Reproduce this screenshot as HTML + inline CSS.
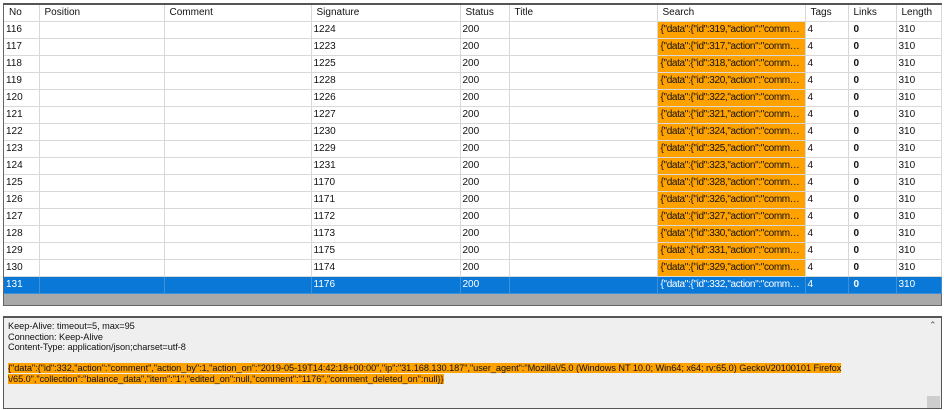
<!DOCTYPE html>
<html><head><style>
body{margin:0;width:944px;height:410px;background:#fff;position:relative;overflow:hidden;font-family:"Liberation Sans",sans-serif;font-size:10px;color:#111}
.grid{position:absolute;left:3px;top:3px;width:937px;height:300px;border:1px solid #666;border-top:2px solid #555;background:#a9a9a9}
table{border-collapse:collapse;table-layout:fixed;width:937px;background:#fff}
td,th{height:16px;padding:0 0 0 2px;border-right:1px solid #d8d8d8;border-bottom:1px solid #d8d8d8;white-space:nowrap;overflow:hidden;text-overflow:ellipsis;text-align:left;font-weight:normal;line-height:16px}
th{padding-left:5px;background:#fff}
td.s{background:#ffa200;padding-left:3px;padding-right:4px;letter-spacing:-0.35px}
td.b{font-weight:bold;padding-left:5px}
tr.sel td{background:#0a78d7;color:#fff;border-color:#3d8fd8}
.box{position:absolute;left:3px;top:316px;width:937px;height:90px;border:1px solid #555;border-top:2px solid #555;background:#efefef}
.txt{position:absolute;left:4px;top:3px;line-height:10.5px;font-size:9.2px;letter-spacing:-0.05px;color:#111}
.hl{background:#ffa200}
.sb{position:absolute;right:0;top:0;width:15px;height:90px;background:#efefef}
</style></head><body>
<div class="grid"><table>
<colgroup><col style="width:35px"><col style="width:125px"><col style="width:147px"><col style="width:149px"><col style="width:49px"><col style="width:148px"><col style="width:148px"><col style="width:43px"><col style="width:48px"><col style="width:45px"></colgroup>
<tr><th>No</th><th>Position</th><th>Comment</th><th>Signature</th><th>Status</th><th>Title</th><th>Search</th><th>Tags</th><th>Links</th><th>Length</th></tr>
<tr><td>116</td><td></td><td></td><td>1224</td><td>200</td><td></td><td class="s">{"data":{"id":319,"action":"comment"</td><td>4</td><td class="b">0</td><td>310</td></tr>
<tr><td>117</td><td></td><td></td><td>1223</td><td>200</td><td></td><td class="s">{"data":{"id":317,"action":"comment"</td><td>4</td><td class="b">0</td><td>310</td></tr>
<tr><td>118</td><td></td><td></td><td>1225</td><td>200</td><td></td><td class="s">{"data":{"id":318,"action":"comment"</td><td>4</td><td class="b">0</td><td>310</td></tr>
<tr><td>119</td><td></td><td></td><td>1228</td><td>200</td><td></td><td class="s">{"data":{"id":320,"action":"comment"</td><td>4</td><td class="b">0</td><td>310</td></tr>
<tr><td>120</td><td></td><td></td><td>1226</td><td>200</td><td></td><td class="s">{"data":{"id":322,"action":"comment"</td><td>4</td><td class="b">0</td><td>310</td></tr>
<tr><td>121</td><td></td><td></td><td>1227</td><td>200</td><td></td><td class="s">{"data":{"id":321,"action":"comment"</td><td>4</td><td class="b">0</td><td>310</td></tr>
<tr><td>122</td><td></td><td></td><td>1230</td><td>200</td><td></td><td class="s">{"data":{"id":324,"action":"comment"</td><td>4</td><td class="b">0</td><td>310</td></tr>
<tr><td>123</td><td></td><td></td><td>1229</td><td>200</td><td></td><td class="s">{"data":{"id":325,"action":"comment"</td><td>4</td><td class="b">0</td><td>310</td></tr>
<tr><td>124</td><td></td><td></td><td>1231</td><td>200</td><td></td><td class="s">{"data":{"id":323,"action":"comment"</td><td>4</td><td class="b">0</td><td>310</td></tr>
<tr><td>125</td><td></td><td></td><td>1170</td><td>200</td><td></td><td class="s">{"data":{"id":328,"action":"comment"</td><td>4</td><td class="b">0</td><td>310</td></tr>
<tr><td>126</td><td></td><td></td><td>1171</td><td>200</td><td></td><td class="s">{"data":{"id":326,"action":"comment"</td><td>4</td><td class="b">0</td><td>310</td></tr>
<tr><td>127</td><td></td><td></td><td>1172</td><td>200</td><td></td><td class="s">{"data":{"id":327,"action":"comment"</td><td>4</td><td class="b">0</td><td>310</td></tr>
<tr><td>128</td><td></td><td></td><td>1173</td><td>200</td><td></td><td class="s">{"data":{"id":330,"action":"comment"</td><td>4</td><td class="b">0</td><td>310</td></tr>
<tr><td>129</td><td></td><td></td><td>1175</td><td>200</td><td></td><td class="s">{"data":{"id":331,"action":"comment"</td><td>4</td><td class="b">0</td><td>310</td></tr>
<tr><td>130</td><td></td><td></td><td>1174</td><td>200</td><td></td><td class="s">{"data":{"id":329,"action":"comment"</td><td>4</td><td class="b">0</td><td>310</td></tr>
<tr class="sel"><td>131</td><td></td><td></td><td>1176</td><td>200</td><td></td><td style="padding-left:3px;padding-right:4px;letter-spacing:-0.35px">{"data":{"id":332,"action":"comment"</td><td>4</td><td class="b">0</td><td>310</td></tr>
</table></div>
<div class="box">
<div class="txt">Keep-Alive: timeout=5, max=95<br>Connection: Keep-Alive<br>Content-Type: application/json;charset=utf-8<br><br>
<span class="hl">{"data":{"id":332,"action":"comment","action_by":1,"action_on":"2019-05-19T14:42:18+00:00","ip":"31.168.130.187","user_agent":"Mozilla\/5.0 (Windows NT 10.0; Win64; x64; rv:65.0) Gecko\/20100101 Firefox</span><br><span class="hl">\/65.0","collection":"balance_data","item":"1","edited_on":null,"comment":"1176","comment_deleted_on":null}}</span></div>
<div class="sb"><div style="position:absolute;left:3px;top:2px;font-size:9px;color:#555">&#8963;</div><div style="position:absolute;left:1px;bottom:0;width:13px;height:12px;background:#cdcdcd"></div></div>
</div>
</body></html>
